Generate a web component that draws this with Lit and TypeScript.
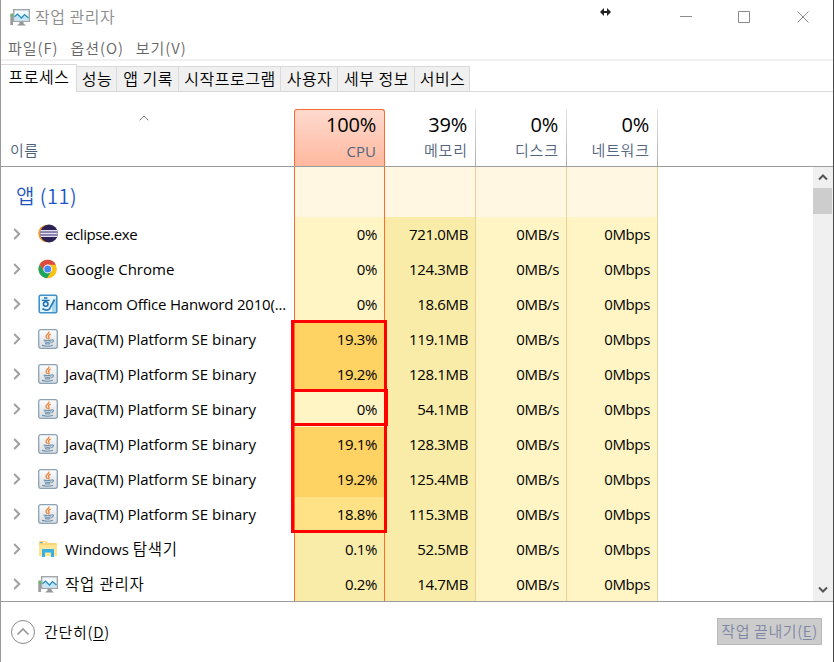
import { LitElement, html, css, svg } from "lit";
import { customElement } from "lit/decorators.js";
import { classMap } from "lit/directives/class-map.js";

type IconName = "eclipse" | "chrome" | "hanword" | "java" | "explorer" | "taskmgr";
type Heat = "low" | "mid" | "warm" | "hot";

interface Proc {
  icon: IconName;
  name: string;
  ko?: string;
  cpu: string;
  heat: Heat;
  mem: string;
}

const JAVA = "Java(TM) Platform SE binary";

const PROCS: Proc[] = [
  { icon: "eclipse", name: "eclipse.exe", cpu: "0%", heat: "low", mem: "721.0MB" },
  { icon: "chrome", name: "Google Chrome", cpu: "0%", heat: "low", mem: "124.3MB" },
  { icon: "hanword", name: "Hancom Office Hanword 2010(...", cpu: "0%", heat: "low", mem: "18.6MB" },
  { icon: "java", name: JAVA, cpu: "19.3%", heat: "hot", mem: "119.1MB" },
  { icon: "java", name: JAVA, cpu: "19.2%", heat: "hot", mem: "128.1MB" },
  { icon: "java", name: JAVA, cpu: "0%", heat: "low", mem: "54.1MB" },
  { icon: "java", name: JAVA, cpu: "19.1%", heat: "hot", mem: "128.3MB" },
  { icon: "java", name: JAVA, cpu: "19.2%", heat: "hot", mem: "125.4MB" },
  { icon: "java", name: JAVA, cpu: "18.8%", heat: "warm", mem: "115.3MB" },
  { icon: "explorer", name: "Windows ", ko: "탐색기", cpu: "0.1%", heat: "mid", mem: "52.5MB" },
  { icon: "taskmgr", name: "", ko: "작업 관리자", cpu: "0.2%", heat: "mid", mem: "14.7MB" },
];

const ART = {
  eclipse: svg`
    <circle cx="9" cy="9.500" r="8.800" fill="#f79a2b"/>
    <circle cx="11" cy="9.500" r="9" fill="#2c2255"/>
    <path d="M2.500 6.800h17M2.200 9.500h17.600M2.500 12.200h17" stroke="#e2deee" stroke-width="1.500"/>
    <path d="M2.300 8.100h17.400M2.300 10.900h17.400" stroke="#9a92c0" stroke-width="1.200"/>`,
  chrome: svg`
    <circle cx="9.700" cy="10" r="9.200" fill="#fbc116"/>
    <path d="M1.700 5.400A9.200 9.200 0 0 0 9 19.200L13.300 12.200 9.700 10 6 12Z" fill="#1da362"/>
    <path d="M1.700 5.400A9.200 9.200 0 0 1 17.800 5.800H9.700L6 12Z" fill="#dd4b3e"/>
    <circle cx="9.700" cy="10" r="4.400" fill="#fff"/>
    <circle cx="9.700" cy="10" r="3.500" fill="#4688f4"/>`,
  hanword: svg`
    <rect x="1.200" y="1.200" width="17.600" height="17.600" rx="1.500" fill="#eaf6fd" stroke="#3f92cc" stroke-width="1.600"/>
    <path d="M14 18V10L18 4V18Z" fill="#a9d6f1"/>
    <path d="M6 4h3.400M3.800 6.400h7.800" stroke="#176daf" stroke-width="1.400" fill="none"/>
    <circle cx="7.700" cy="10" r="2.300" fill="none" stroke="#176daf" stroke-width="1.500"/>
    <path d="M4.500 14.500q3.500 2.800 7 .5l5-9.500" stroke="#2a80bd" stroke-width="1.700" fill="none"/>`,
  java: svg`
    <defs><linearGradient id="jv" x2="0" y2="1"><stop stop-color="#fdfdfd"/><stop offset="1" stop-color="#d9dcdf"/></linearGradient></defs>
    <rect x=".7" y=".7" width="18.600" height="18.600" rx="2" fill="url(#jv)" stroke="#8ba3b7" stroke-width="1.300"/>
    <path d="M10.800 2.500c1.200 2-3.600 3.300-2.800 5.200.2.900 1.300 1.500 1.300 2.300M12.700 5.200c-2.400 1-2.600 2-1.700 3 .4.700 0 1.400-.8 1.900" fill="none" stroke="#ee8136" stroke-width="1.300"/>
    <path d="M5.500 11q4 1 8.300 0M6.300 12.800q3.500 1.200 6.600 0M7 14.500q2.800 1 5.300 0M4 16.400q5.500 1.700 11-.2M13.800 10.900c2.600-.4 2 2.200-.5 2.700" fill="none" stroke="#6c91af" stroke-width="1.100"/>`,
  explorer: svg`
    <path d="M1 17V3q0-1 1-1h6l2 2h8q1 0 1 1v12Z" fill="#fbd56f"/>
    <path d="M1 6h18v11H1Z" fill="#fee596"/>
    <path d="M2.500 3h2v1.200h-2z" fill="#2baee5"/><path d="M5 3h2.500v1.200H5z" fill="#fff"/>
    <path d="M4 18v-7q0-1 1-1h10q1 0 1 1v7h-3v-4.500H7V18Z" fill="#38b0e6"/>`,
  taskmgr: svg`
    <rect x=".3" y="6.500" width="2.700" height="11.500" fill="#9c9c9c"/><rect x="1" y="7.500" width="2" height="2" fill="#36d23b"/>
    <rect x="3.700" y="2.700" width="15.600" height="11.600" fill="#f2f9fd" stroke="#a2a6a9" stroke-width="1.400"/>
    <path d="M4.500 10l3-3 4 4 3-3.500 4 3.500v2.500H4.500Z" fill="#c3e5f6"/>
    <path d="M4.500 9.800l3-2.800 4 4 3-3.500 4 3.500" fill="none" stroke="#2389bd" stroke-width="1.200"/>
    <path d="M9.500 15h4v1.500l2.500 2H7l2.500-2Z" fill="#929698"/>`,
};

const icon = (name: IconName) => html`<svg class="icon" viewBox="0 0 20 20">${ART[name]}</svg>`;

@customElement("app-root")
export class AppRoot extends LitElement {
  static styles = css`
    :host {
      display: block;
      width: 834px;
      height: 662px;
      overflow: hidden;
      font: 15px/20px "Open Sans", "Noto Sans CJK KR", sans-serif;
      color: #000;
    }
    * { box-sizing: border-box; }
    svg { display: block; flex: none; }
    .window {
      display: flex;
      flex-direction: column;
      height: 662px;
      background: #fff;
      border-left: 1px solid #999;
      border-right: 1px solid #4b4b4b;
      white-space: nowrap;
    }
    .ko { font-family: "Noto Sans CJK KR", sans-serif; font-weight: 350; }
    .title { display: flex; height: 34px; padding: 0 0 0 9px; color: #8c8c8c; align-items: center; }
    .title .ko { margin: 0 0 2px 5px; font-size: 16px; letter-spacing: 0.5px; flex: 1; }
    .title .controls { margin-right: -1px; }
    .icon { width: 20px; height: 20px; }
    .menu { display: flex; height: 27px; padding: 4px 0 0 7px; gap: 12px; color: #666; border-bottom: 2px solid #f1f1f1; letter-spacing: 0.95px; }
    .tabs { display: flex; height: 31px; align-items: flex-end; padding-top: 3px; border-bottom: 1px solid #d9d9d9; font-size: 16px; letter-spacing: 0.5px; }
    .tab { flex: none; height: 25px; padding: 1px 0 0 1px; background: #f0f0f0; border: 1px solid #d9d9d9; border-left: 0; border-bottom: 0; text-align: center; }
    .tab.on { height: 28px; margin-bottom: -1px; background: #fff; }
    .t0 { width: 76px; } .t1 { width: 40px; } .t2 { width: 62px; } .t3 { width: 102px; }
    .t4 { width: 57px; } .t5 { width: 77px; } .t6 { width: 55px; }
    .head { display: flex; height: 75px; padding-top: 17px; border-bottom: 1px solid #9c9c9c; }
    .namehead { width: 293px; display: flex; flex-direction: column; justify-content: space-between; padding: 6px 0 6px 9px; color: #4c607a; letter-spacing: 0.5px; }
    .namehead svg { margin-left: 129px; }
    .col { width: 91px; text-align: right; padding: 3px 8px 0 0; border-right: 1px solid; border-image: linear-gradient(#e6e6e6, #ababab) 1; }
    .col.cpu { background: linear-gradient(#fddace, #ffb89e); border: 1px solid #ff6b2f; border-image: none; border-bottom: 0; border-radius: 3px 3px 0 0; padding-top: 2px; }
    .pct { font-size: 20px; line-height: 26px; letter-spacing: -0.2px; }
    .lbl { color: #52657f; line-height: 26px; font-size: 15px; }
    .lbl.ko { line-height: 24px; letter-spacing: 0.8px; margin-right: -0.8px; }
    .body { display: flex; height: 435px; border-bottom: 1px solid #9c9c9c; }
    .list { flex: 1; position: relative; overflow: hidden; }
    .row { display: flex; height: 35px; }
    .row.group { height: 50px; }
    .name { width: 293px; display: flex; align-items: center; padding: 0 0 2px 12px; }
    .name .icon { margin: 1px 7px 0 17px; }
    .name .eclipse { letter-spacing: -0.4px; }
    .name .hanword { letter-spacing: -0.19px; }
    .name .java { letter-spacing: -0.03px; }
    .name .ko { font-size: 15.5px; letter-spacing: 0.8px; }
    .group .name { padding: 8px 0 0 15px; font-size: 20px; letter-spacing: 0.5px; color: #1e57c4; }
    .cell { width: 91px; line-height: 34px; text-align: right; padding-right: 7px; border-right: 1px solid #e8d49b; background: #fff4c4; letter-spacing: -0.35px; }
    .cell.cpu { border-left: 1px solid #ff6b2f; border-right-color: #ff6b2f; }
    .cell.mid { background: #f9eca8; }
    .cell.warm { background: #ffe285; }
    .cell.hot { background: #ffd264; }
    .group .cell { background: #fff7e1; }
    .mark { position: absolute; border: 3px solid #f00; }
    .mark.outer { left: 290px; top: 153px; width: 96px; height: 213px; }
    .mark.inner { left: 290px; top: 222px; width: 97px; height: 37px; }
    .scroll { width: 20px; background: #f0f0f0; display: flex; flex-direction: column; padding: 7px 0 8px; align-items: center; }
    .thumb { width: 19px; height: 26px; margin: 7px 1px 0 0; background: #cdcdcd; }
    .scroll .dn { margin-top: auto; }
    .foot { display: flex; flex: 1; padding: 16px 11px 0 9px; }
    .fewer { margin: 4px 0 0 8px; flex: 1; letter-spacing: 0.7px; }
    .end { width: 105px; height: 27px; line-height: 23px; border: 1px solid #b9b9b9; background: #ccc; color: #8087a5; text-align: center; letter-spacing: 0.6px; }
    u { text-underline-offset: 2px; text-decoration-thickness: 1px; }
  `;

  private row(p: Proc) {
    return html`<div class="row">
      <div class="name">
        <svg width="8" height="12" viewBox="0 0 8 12"><path d="M1.200 1l5 5-5 5" fill="none" stroke="#a0a0a0" stroke-width="2"/></svg>
        ${icon(p.icon)}<div class=${p.icon}>${p.name}${p.ko ? html`<span class="ko">${p.ko}</span>` : ""}</div>
      </div>
      <div class=${classMap({ cell: true, cpu: true, [p.heat]: true })}>${p.cpu}</div>
      <div class="cell mid">${p.mem}</div>
      <div class="cell">0MB/s</div>
      <div class="cell">0Mbps</div>
    </div>`;
  }

  render() {
    const tabs = ["프로세스", "성능", "앱 기록", "시작프로그램", "사용자", "세부 정보", "서비스"];
    const cols = [["100%", "CPU"], ["39%", "메모리"], ["0%", "디스크"], ["0%", "네트워크"]];
    return html`<div class="window">
      <div class="title">
        ${icon("taskmgr")}<span class="ko">작업 관리자</span>
        <svg class="controls" width="234" height="34" viewBox="0 0 234 34">
          <path d="M0 12l4-4v3h3v-3l4 4-4 4v-3H4v3Z" fill="#222"/>
          <path d="M80 16.500h12M138.500 11.500h11v11h-11ZM197.500 11.500l11 11m0-11l-11 11" fill="none" stroke="#8c8c8c"/>
        </svg>
      </div>
      <div class="menu ko"><span>파일(F)</span><span>옵션(O)</span><span>보기(V)</span></div>
      <div class="tabs ko">${tabs.map((t, i) => html`<div class="tab t${i} ${i ? "" : "on"}">${t}</div>`)}</div>
      <div class="head">
        <div class="namehead">
          <svg width="10" height="6" viewBox="0 0 10 6"><path d="M.7 5.300L5 1l4.300 4.300" fill="none" stroke="#777"/></svg>
          <span class="ko">이름</span>
        </div>
        ${cols.map(([v, l], i) => html`<div class=${classMap({ col: true, cpu: i === 0 })}>
          <div class="pct">${v}</div><div class=${classMap({ lbl: true, ko: i > 0 })}>${l}</div>
        </div>`)}
      </div>
      <div class="body">
        <div class="list">
          <div class="row group">
            <div class="name ko">앱 (11)</div>
            <div class="cell cpu"></div><div class="cell"></div><div class="cell"></div><div class="cell"></div>
          </div>
          ${PROCS.map((p) => this.row(p))}
          <div class="mark outer"></div>
          <div class="mark inner"></div>
        </div>
        <div class="scroll">
          <svg width="10" height="7" viewBox="0 0 10 7"><path d="M1 5.500l4-4 4 4" fill="none" stroke="#555" stroke-width="2"/></svg>
          <div class="thumb"></div>
          <svg class="dn" width="10" height="7" viewBox="0 0 10 7"><path d="M1 1.500l4 4 4-4" fill="none" stroke="#555" stroke-width="2"/></svg>
        </div>
      </div>
      <div class="foot">
        <svg width="26" height="28" viewBox="0 0 26 28"><circle cx="13" cy="14" r="11.500" fill="none" stroke="#8a8a8a"/><path d="M7.500 16.500L13 11l5.500 5.500" fill="none" stroke="#999" stroke-width="1.700"/></svg>
        <span class="fewer ko">간단히(<u>D</u>)</span>
        <div class="end ko">작업 끝내기(<u>E</u>)</div>
      </div>
    </div>`;
  }
}
